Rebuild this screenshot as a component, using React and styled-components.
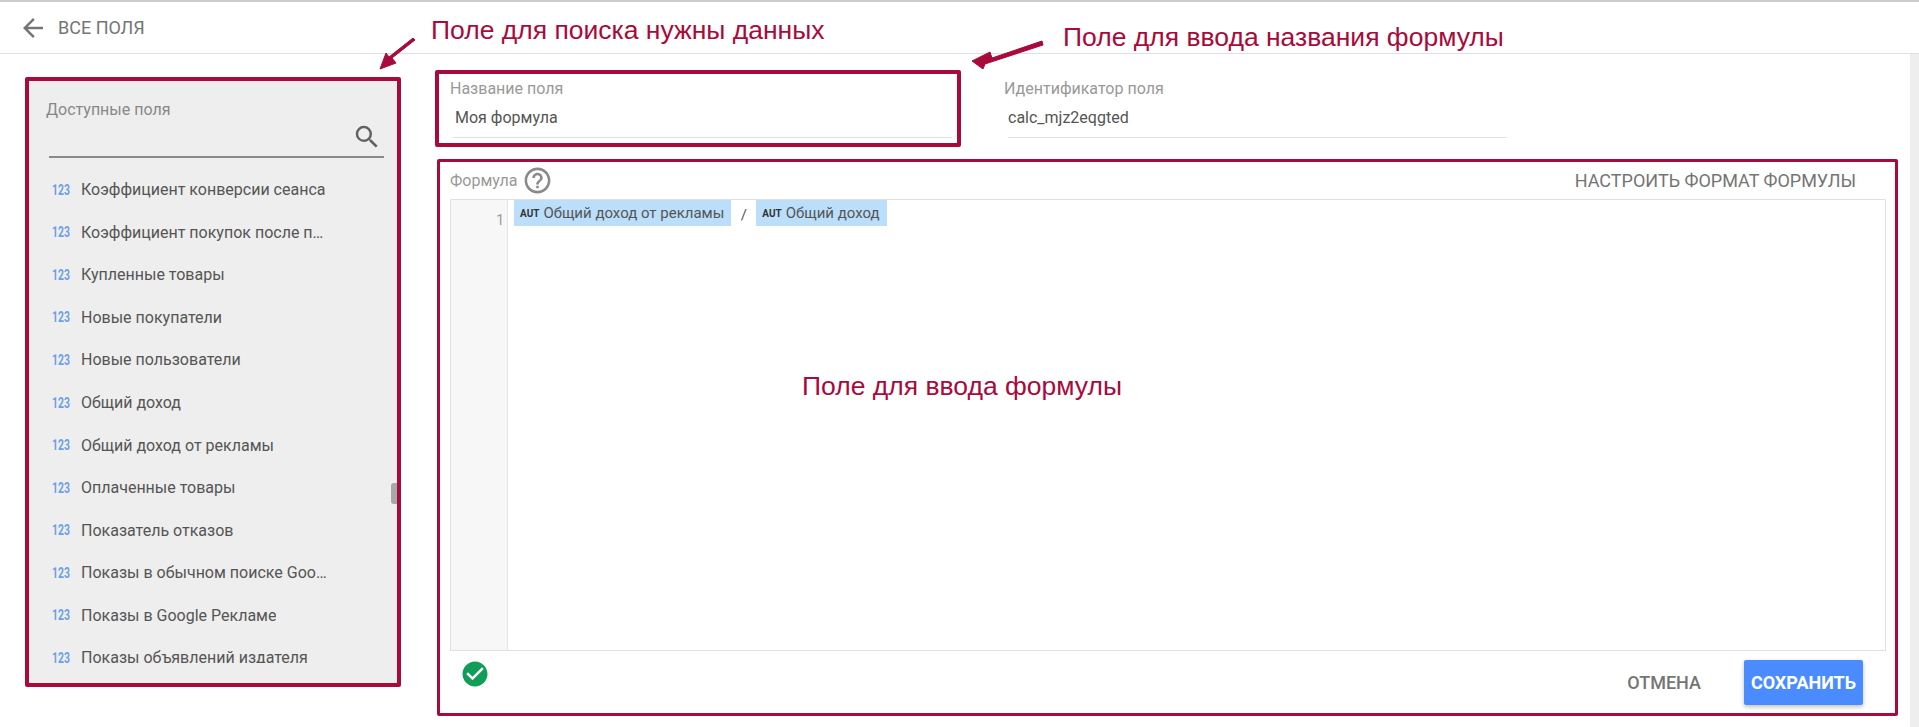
import React from "react";
import styled, { createGlobalStyle } from "styled-components";

const RED = "#a80a3c";

const GlobalStyle = createGlobalStyle`
  html, body {
    margin: 0;
    padding: 0;
    background: #fff;
    overflow: hidden;
  }
  * {
    box-sizing: border-box;
  }
`;

const Page = styled.div`
  position: relative;
  width: 1919px;
  height: 727px;
  display: flex;
  flex-direction: column;
  font-family: Roboto, "Liberation Sans", sans-serif;
  overflow: hidden;
`;

const Header = styled.header`
  height: 54px;
  flex: none;
  display: flex;
  align-items: center;
  padding: 0 0 0 18px;
  border-top: 2px solid #ccc;
  border-bottom: 1px solid #e0e0e0;
`;

const BackLabel = styled.span`
  margin-left: 10px;
  font-size: 18px;
  color: #757575;
  text-transform: uppercase;
`;

const Body = styled.div`
  flex: 1;
  display: flex;
  min-height: 0;
`;

const Content = styled.main`
  flex: 1;
  display: flex;
  padding: 16px 0 0 25px;
  gap: 34px;
`;

const ScrollTrack = styled.div`
  width: 9px;
  flex: none;
  background: #eee;
`;

const FieldsPanel = styled.aside`
  position: relative;
  width: 376px;
  height: 610px;
  margin-top: 7px;
  display: flex;
  flex-direction: column;
  background: #eee;
  border: 4px solid ${RED};
  border-radius: 2px;
  padding: 21px 0 0 17px;
`;

const PanelLabel = styled.div`
  font-size: 16px;
  line-height: 16px;
  color: #888;
`;

const SearchBar = styled.div`
  width: 335px;
  height: 40px;
  margin: 0 0 0 3px;
  display: flex;
  align-items: center;
  justify-content: flex-end;
  padding-right: 2px;
  border-bottom: 2px solid #8a8a8a;
`;

const FieldList = styled.ul`
  list-style: none;
  margin: 0;
  padding: 10.5px 0 0 6px;
  height: 505px;
  overflow: hidden;
`;

const FieldRow = styled.li`
  height: 42.55px;
  display: flex;
  align-items: center;
`;

const TypeBadge = styled.span`
  width: 29px;
  flex: none;
  font-size: 14px;
  font-weight: 700;
  color: #6c9fe4;
  transform: scaleX(0.74);
  transform-origin: left center;
`;

const FieldName = styled.span`
  max-width: 250px;
  font-size: 16px;
  color: #555;
  white-space: nowrap;
  overflow: hidden;
  text-overflow: ellipsis;
`;

const ListThumb = styled.div`
  position: absolute;
  right: 0;
  top: 402px;
  width: 6px;
  height: 21px;
  background: #a8a8a8;
  border-radius: 3px 0 0 3px;
`;

const EditorColumn = styled.section`
  flex: 1;
  display: flex;
  flex-direction: column;
  gap: 12px;
`;

const FieldsRow = styled.div`
  display: flex;
  gap: 43px;
`;

const NameBox = styled.div`
  width: 526px;
  height: 77px;
  padding: 7px 5px 0 11px;
  border: 4px solid ${RED};
  border-radius: 2px;
`;

const IdBox = styled.div`
  width: 503px;
  height: 77px;
  padding: 11px 0 0 0;
`;

const FieldCaption = styled.div`
  font-size: 16px;
  line-height: 16px;
  color: #999;
`;

const FieldValue = styled.div`
  margin: 9px 0 0 ${(p) => p.$inset}px;
  height: 32px;
  padding: 4px 0 0 ${(p) => p.$pad}px;
  font-size: 16px;
  line-height: 16px;
  color: #555;
  border-bottom: 1px solid #e2e2e2;
`;

const FormulaBox = styled.div`
  width: 1461px;
  height: 557px;
  margin-left: 2px;
  display: flex;
  flex-direction: column;
  padding: 0 9px 0 10px;
  border: 3px solid ${RED};
  border-radius: 2px;
`;

const FormulaHead = styled.div`
  height: 37px;
  flex: none;
  display: flex;
  align-items: center;
  justify-content: space-between;
  padding-right: 30px;
`;

const HeadLeft = styled.div`
  display: flex;
  align-items: center;
  gap: 4px;
  font-size: 16px;
  color: #999;
`;

const FormatLink = styled.span`
  font-size: 18px;
  color: #757575;
  text-transform: uppercase;
`;

const Editor = styled.div`
  height: 452px;
  flex: none;
  display: flex;
  border: 1px solid #e0e0e0;
`;

const Gutter = styled.div`
  width: 57px;
  flex: none;
  padding: 12px 3px 0 0;
  background: #f7f7f7;
  border-right: 1px solid #e4e4e4;
  font-size: 14px;
  line-height: 16px;
  color: #999;
  text-align: right;
`;

const Code = styled.div`
  display: flex;
  align-items: flex-start;
  padding-left: 6px;
`;

const Chip = styled.span`
  height: 26px;
  display: flex;
  align-items: center;
  padding: 0 7px 0 6px;
  gap: 4px;
  background: #bbdefb;
  font-size: 15px;
  color: #555;
  white-space: nowrap;
`;

const ChipTag = styled.span`
  font-size: 10px;
  font-weight: 700;
  color: #333;
`;

const Operator = styled.span`
  width: 25px;
  padding-top: 6px;
  text-align: center;
  font-size: 15px;
  line-height: 18px;
  color: #555;
`;

const FormulaFoot = styled.div`
  flex: 1;
  display: flex;
  justify-content: space-between;
  padding: 8px 23px 0 10px;
`;

const Actions = styled.div`
  display: flex;
  align-items: flex-start;
  gap: 43px;
  margin-top: 1px;
`;

const CancelButton = styled.button`
  height: 45px;
  padding: 0;
  border: 0;
  background: none;
  font-family: inherit;
  font-size: 18px;
  font-weight: 500;
  color: #757575;
`;

const SaveButton = styled.button`
  width: 119px;
  height: 45px;
  padding: 0;
  border: 0;
  border-radius: 2px;
  background: #4a8cff;
  box-shadow: 0 2px 4px rgba(0, 0, 0, 0.25);
  font-family: inherit;
  font-size: 18px;
  font-weight: 700;
  color: #fff;
`;

// callouts drawn over the page
const Note = styled.div`
  position: absolute;
  left: ${(p) => p.$x}px;
  top: ${(p) => p.$y}px;
  font-family: "Liberation Sans", Arial, sans-serif;
  font-size: 26.5px;
  line-height: 28px;
  color: ${RED};
  white-space: nowrap;
`;

const ArrowLayer = styled.svg`
  position: absolute;
  left: 0;
  top: 0;
  pointer-events: none;
`;

const Icon = styled.svg`
  flex: none;
  display: block;
  fill: ${(p) => p.$color};
`;

const fields = [
  "Коэффициент конверсии сеанса",
  "Коэффициент покупок после покупки",
  "Купленные товары",
  "Новые покупатели",
  "Новые пользователи",
  "Общий доход",
  "Общий доход от рекламы",
  "Оплаченные товары",
  "Показатель отказов",
  "Показы в обычном поиске Google",
  "Показы в Google Рекламе",
  "Показы объявлений издателя",
];

export default function App() {
  return (
    <Page>
      <GlobalStyle />
      <Header>
        <Icon width="30" height="30" viewBox="0 0 24 24" $color="#757575">
          <path d="M20 11H7.83l5.59-5.59L12 4l-8 8 8 8 1.41-1.41L7.83 13H20v-2z" />
        </Icon>
        <BackLabel>Все поля</BackLabel>
      </Header>
      <Body>
        <Content>
          <FieldsPanel>
            <PanelLabel>Доступные поля</PanelLabel>
            <SearchBar>
              <Icon width="30" height="30" viewBox="0 0 24 24" $color="#616161">
                <path d="M15.5 14h-.79l-.28-.27A6.471 6.471 0 0 0 16 9.5 6.5 6.5 0 1 0 9.5 16c1.61 0 3.09-.59 4.23-1.57l.27.28v.79l5 4.99L20.49 19l-4.99-5zm-6 0C7.01 14 5 11.99 5 9.5S7.01 5 9.5 5 14 7.01 14 9.5 11.99 14 9.5 14z" />
              </Icon>
            </SearchBar>
            <FieldList>
              {fields.map((name) => (
                <FieldRow key={name}>
                  <TypeBadge>123</TypeBadge>
                  <FieldName>{name}</FieldName>
                </FieldRow>
              ))}
            </FieldList>
            <ListThumb />
          </FieldsPanel>
          <EditorColumn>
            <FieldsRow>
              <NameBox>
                <FieldCaption>Название поля</FieldCaption>
                <FieldValue $inset={3} $pad={2}>Моя формула</FieldValue>
              </NameBox>
              <IdBox>
                <FieldCaption>Идентификатор поля</FieldCaption>
                <FieldValue $inset={4} $pad={0}>calc_mjz2eqgted</FieldValue>
              </IdBox>
            </FieldsRow>
            <FormulaBox>
              <FormulaHead>
                <HeadLeft>
                  Формула
                  <Icon width="31" height="31" viewBox="0 0 24 24" $color="#8a8a8a">
                    <path d="M11 18h2v-2h-2v2zm1-16C6.48 2 2 6.48 2 12s4.48 10 10 10 10-4.48 10-10S17.52 2 12 2zm0 18c-4.41 0-8-3.59-8-8s3.59-8 8-8 8 3.59 8 8-3.59 8-8 8zm0-14c-2.21 0-4 1.79-4 4h2c0-1.1.9-2 2-2s2 .9 2 2c0 2-3 1.75-3 5h2c0-2.25 3-2.5 3-5 0-2.21-1.79-4-4-4z" />
                  </Icon>
                </HeadLeft>
                <FormatLink>Настроить формат формулы</FormatLink>
              </FormulaHead>
              <Editor>
                <Gutter>1</Gutter>
                <Code>
                  <Chip><ChipTag>AUT</ChipTag>Общий доход от рекламы</Chip>
                  <Operator>/</Operator>
                  <Chip><ChipTag>AUT</ChipTag>Общий доход</Chip>
                </Code>
              </Editor>
              <FormulaFoot>
                <Icon width="30" height="30" viewBox="0 0 24 24" $color="#0f9d58">
                  <path d="M12 2C6.48 2 2 6.48 2 12s4.48 10 10 10 10-4.48 10-10S17.52 2 12 2zm-2 15l-5-5 1.41-1.41L10 14.17l7.59-7.59L19 8l-9 9z" />
                </Icon>
                <Actions>
                  <CancelButton>ОТМЕНА</CancelButton>
                  <SaveButton>СОХРАНИТЬ</SaveButton>
                </Actions>
              </FormulaFoot>
            </FormulaBox>
          </EditorColumn>
        </Content>
        <ScrollTrack />
      </Body>

      <Note $x={431} $y={16}>Поле для поиска нужны данных</Note>
      <Note $x={1063} $y={23}>Поле для ввода названия формулы</Note>
      <Note $x={802} $y={372}>Поле для ввода формулы</Note>
      <ArrowLayer width="1919" height="727" viewBox="0 0 1919 727">
        <path d="M415 40 L392 58 L396 63 L380 69 L386 53 L389 57 L413 38 Z" fill={RED} stroke={RED} strokeWidth="1" strokeLinejoin="round" />
        <path d="M1042 41 L992 58 L990 52 L972 61 L983 69 L985 64 L1043 45 Z" fill={RED} stroke={RED} strokeWidth="1" strokeLinejoin="round" />
      </ArrowLayer>
    </Page>
  );
}
